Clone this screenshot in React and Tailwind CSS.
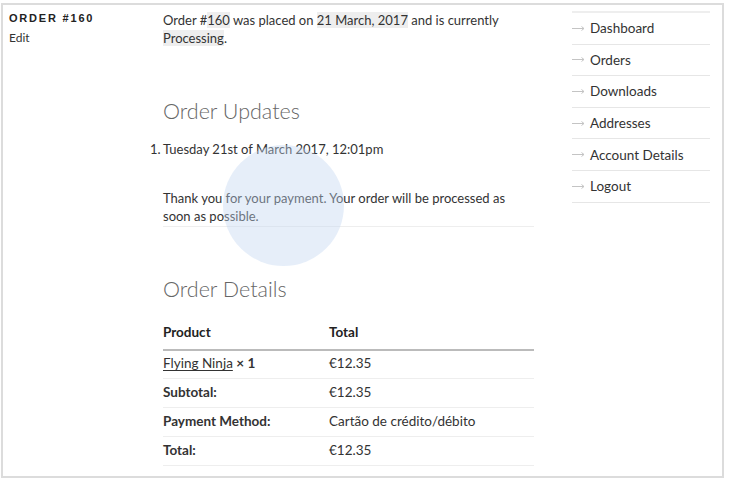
import React from "react";

function Arrow() {
  return (
    <svg width="13" height="7" viewBox="0 0 13 7" className="mr-[5px] shrink-0">
      <path d="M0 3.5 H12 M9.5 1.5 L12 3.5 L9.5 5.5" stroke="#c4c4c4" strokeWidth="1" fill="none" />
    </svg>
  );
}

function Row({ label, value, first }) {
  return (
    <div className={`flex items-center pb-[3px] border-b border-[#eee] ${first ? "h-[28px]" : "h-[29px]"}`}>
      <div className="w-[166px]">{label}</div>
      <div>{value}</div>
    </div>
  );
}

export default function App() {
  const nav = ["Dashboard", "Orders", "Downloads", "Addresses", "Account Details", "Logout"];
  return (
    <div className="w-[729px] h-[480px] bg-white text-[#333] font-['Lato',Arial,sans-serif]">
      <div className="relative ml-[1px] pt-[3px]">
        <div className="w-[723px] h-[475px] border-2 border-[#dcdcdc] flex">
          {/* left */}
          <div className="w-[160px] pl-[6px] pt-[6px]">
            <div className="text-[11px] font-extrabold tracking-[1.8px] leading-[14px] text-[#222] font-['Liberation_Sans',Arial,sans-serif]">ORDER #160</div>
            <div className="text-[12px] leading-[16px] mt-[5px]">Edit</div>
          </div>
          {/* main */}
          <div className="w-[371px] pt-[6px] text-[13px] leading-[18px]">
            <p>
              Order #<mark className="bg-[#eee] text-[#333]">160</mark> was placed on{" "}
              <mark className="bg-[#eee] text-[#333]">21 March, 2017</mark> and is currently{" "}
              <mark className="bg-[#eee] text-[#333]">Processing</mark>.
            </p>
            <h2 className="mt-[50px] text-[21.5px] leading-[28px] font-light text-[#666]">Order Updates</h2>
            <ol className="mt-[15px]">
              <li className="relative">
                <span className="absolute left-[-13px]">1.</span>
                Tuesday 21st of March 2017, 12:01pm
                <p className="mt-[31px] pb-[1px] border-b border-[#eee]">
                  Thank you for your payment. Your order will be processed as soon as possible.
                </p>
              </li>
            </ol>
            <h2 className="mt-[48px] text-[21.5px] leading-[28px] font-light text-[#666]">Order Details</h2>
            <div className="mt-[19px] text-[13.5px]">
              <div className="flex h-[29px] pt-[1px] items-start border-b-2 border-[#bbb] font-bold text-[#222]">
                <div className="w-[166px]">Product</div>
                <div>Total</div>
              </div>
              <Row
                first
                label={
                  <span>
                    <span className="underline underline-offset-2">Flying Ninja</span>{" "}
                    <strong className="font-bold">× 1</strong>
                  </span>
                }
                value="€12.35"
              />
              <Row label={<strong>Subtotal:</strong>} value="€12.35" />
              <Row label={<strong>Payment Method:</strong>} value="Cartão de crédito/débito" />
              <Row label={<strong>Total:</strong>} value="€12.35" />
            </div>
          </div>
          {/* sidebar */}
          <div className="ml-[38px] w-[138px] pt-[6px]">
            <div className="border-t-2 border-[#eee]">
              {nav.map((n) => (
                <div key={n} className="h-[31.6px] flex items-center border-b border-[#e6e6e6] text-[13.5px]">
                  <Arrow />
                  <span>{n}</span>
                </div>
              ))}
            </div>
          </div>
        </div>
        <div className="absolute left-[222px] top-[145px] w-[121px] h-[121px] rounded-full bg-[rgba(192,212,240,0.4)]" />
      </div>
    </div>
  );
}
